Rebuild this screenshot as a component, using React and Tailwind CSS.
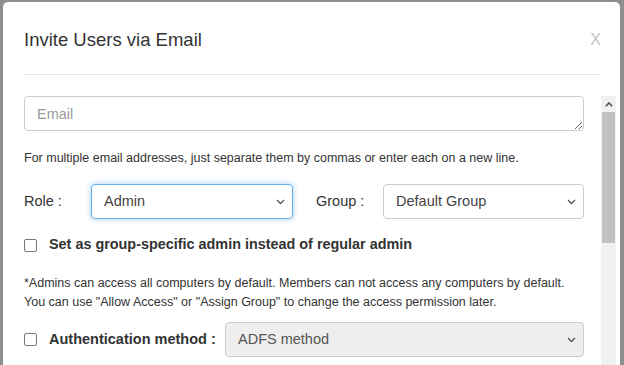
const font = { fontFamily: '"Liberation Sans", Arial, sans-serif' }

function Chevron() {
  return (
    <svg width="9" height="6" viewBox="0 0 9 6" className="shrink-0">
      <path d="M1 1l3.5 3.5L8 1" fill="none" stroke="#555" strokeWidth="1.3" />
    </svg>
  )
}

function Select({ value, width, focused, disabled }) {
  const tone = focused
    ? 'border-[#66afe9] shadow-[0_0_6px_rgba(102,175,233,0.6)]'
    : 'border-[#cccccc]'
  return (
    <div
      className={`h-[35px] flex items-center justify-between rounded-[4px] border pl-[12px] pr-[7px] text-[14.5px] ${tone} ${disabled ? 'bg-[#eeeeee] text-[#555]' : 'bg-white text-[#444]'}`}
      style={{ width }}
    >
      <span>{value}</span>
      <Chevron />
    </div>
  )
}

function Box() {
  return <span className="w-[13px] h-[13px] shrink-0 rounded-[2px] border border-[#77777f] bg-white" />
}

export default function App() {
  return (
    <div className="w-[624px] h-[365px] overflow-hidden bg-[#8e8e8e] pt-[2px] pl-[3px]" style={font}>
      <div className="w-[617px] h-[363px] bg-white rounded-t-[5px] flex flex-col text-[#333]">
        {/* header */}
        <div className="ml-[21px] mr-[20px] pt-[26px] pb-[23px] border-b border-[#e5e5e5] flex items-start justify-between">
          <h4 className="text-[18.5px] leading-[23px]">Invite Users via Email</h4>
          <span className="text-[16px] leading-[23px] text-[#c2c2c2] -mr-[1px]">X</span>
        </div>

        {/* body */}
        <div className="flex flex-1 pt-[21px] min-h-0">
          <div className="ml-[21px] w-[560px]">
            <textarea
              placeholder="Email"
              className="block w-full h-[35px] rounded-[4px] border border-[#cccccc] px-[12px] py-[7px] text-[14.5px] leading-[20px] placeholder:text-[#999] outline-none"
            />
            <p className="mt-[18px] text-[12.5px] leading-[18px]">
              For multiple email addresses, just separate them by commas or enter each on a new line.
            </p>

            <div className="mt-[17px] flex items-center text-[14.5px]">
              <span className="w-[67px]">Role :</span>
              <Select value="Admin" width={202} focused />
              <span className="ml-[23px] w-[67px]">Group :</span>
              <Select value="Default Group" width={201} />
            </div>

            <label className="mt-[16px] h-[20px] flex items-center gap-[12px] text-[14.4px] font-bold">
              <Box />
              Set as group-specific admin instead of regular admin
            </label>

            <p className="mt-[19px] text-[12.5px] leading-[19px]">
              *Admins can access all computers by default. Members can not access any computers by default.
              <br />
              You can use "Allow Access" or "Assign Group" to change the access permission later.
            </p>

            <div className="mt-[10px] flex items-center text-[14.5px]">
              <Box />
              <span className="ml-[12px] w-[176px] font-bold">Authentication method :</span>
              <Select value="ADFS method" width={359} disabled />
            </div>
          </div>

          {/* scrollbar */}
          <div className="ml-auto mr-[4px] w-[15px] bg-[#f1f1f1] flex flex-col">
            <div className="h-[16px] flex items-center justify-center">
              <svg width="8" height="5" viewBox="0 0 8 5">
                <path d="M0.8 4.2L4 1l3.2 3.2" fill="none" stroke="#505050" strokeWidth="1.6" />
              </svg>
            </div>
            <div className="h-[131px] mx-[1px] bg-[#c1c1c1]" />
          </div>
        </div>
      </div>
    </div>
  )
}
